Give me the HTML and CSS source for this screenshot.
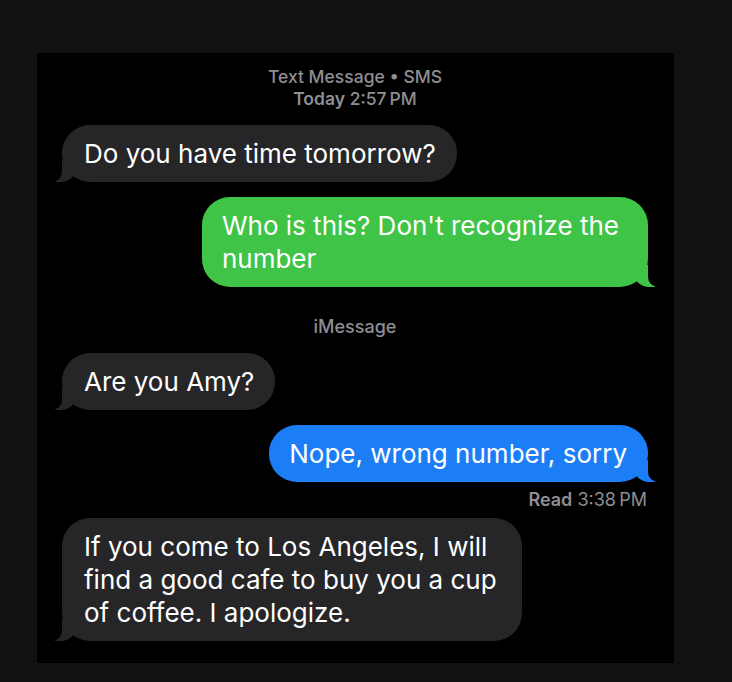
FILE: index.html
```html
<!DOCTYPE html>
<html>
<head>
<meta charset="utf-8">
<link rel="stylesheet" href="styles.css">
</head>
<body>
<div class="panel">
  <div class="meta">
    <div>Text Message • SMS</div>
    <div><b>Today</b> 2:57&#8201;PM</div>
  </div>
  <div class="row in"><div class="bubble recv">Do you have time tomorrow?</div></div>
  <div class="row out"><div class="bubble sent green">Who is this? Don't recognize the<br>number</div></div>
  <div class="service">iMessage</div>
  <div class="row in gap16"><div class="bubble recv">Are you Amy?</div></div>
  <div class="row out"><div class="bubble sent blue">Nope, wrong number, sorry</div></div>
  <div class="read"><b>Read</b> 3:38&#8201;PM</div>
  <div class="row in gap8"><div class="bubble recv wide">If you come to Los Angeles, I will<br>find a good cafe to buy you a cup<br>of coffee. I apologize.</div></div>
</div>
</body>
</html>
```
FILE: styles.css
```css
html, body {
  margin: 0;
  background: #111111;
}
body {
  padding: 53px 0 0 37px;
  height: 682px;
  box-sizing: border-box;
  font-family: Inter, "Noto Sans", sans-serif;
}
.panel {
  width: 637px;
  height: 610px;
  background: #000;
  box-sizing: border-box;
  padding: 13px 26px 0 25px;
  display: flex;
  flex-direction: column;
}
.meta {
  text-align: center;
  color: #8e8e93;
  font-size: 17.5px;
  line-height: 22px;
  font-weight: 500;
}
.meta b { font-weight: 600; }
.row {
  display: flex;
  margin-top: 15px;
}
.row.in { justify-content: flex-start; }
.row.out { justify-content: flex-end; }
.row.gap16 { margin-top: 16px; }
.row.gap8 { margin-top: 8px; }
.bubble {
  position: relative;
  font-size: 26px;
  line-height: 33px;
  color: #fff;
  padding: 12px 21px 12px 22px;
  border-radius: 28px;
}
.recv { background: #262628; }
.recv.wide { padding-right: 25px; }
.green { background: #3fc447; padding-left: 20px; padding-right: 29px; }
.blue { background: #1c7ef7; padding-left: 20px; }
.bubble::before,
.bubble::after {
  content: "";
  position: absolute;
  bottom: 0;
  height: 22px;
}
.recv::before {
  left: -7px;
  width: 22px;
  background: #262628;
  border-bottom-right-radius: 16px;
}
.recv::after {
  left: -10px;
  width: 10px;
  background: #000;
  border-bottom-right-radius: 10px;
}
.sent::before {
  right: -7px;
  width: 22px;
  border-bottom-left-radius: 16px;
}
.green::before { background: #3fc447; }
.blue::before { background: #1c7ef7; }
.sent::after {
  right: -10px;
  width: 10px;
  background: #000;
  border-bottom-left-radius: 10px;
}
.service {
  text-align: center;
  color: #8e8e93;
  font-size: 18px;
  line-height: 20px;
  margin-top: 30px;
  font-weight: 500;
}
.read {
  text-align: right;
  color: #8e8e93;
  font-size: 18px;
  line-height: 20px;
  margin-top: 8px;
  padding-right: 1px;
}
.read b { font-weight: 600; }
```
